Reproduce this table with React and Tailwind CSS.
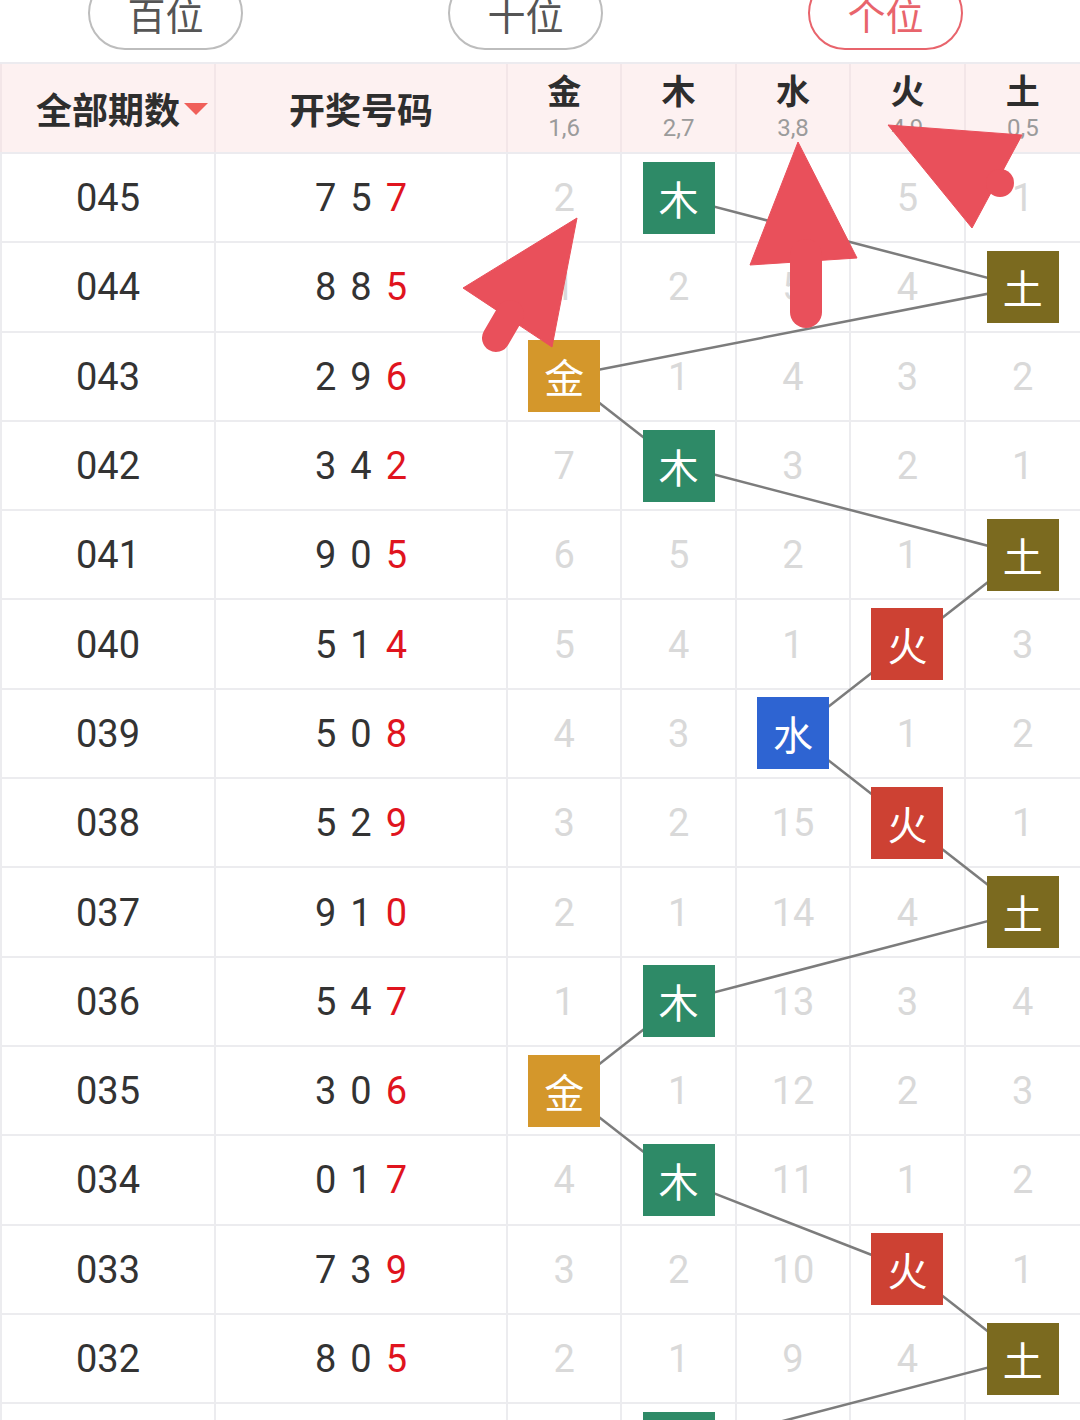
import React from 'react';

const CJK = { fontFamily: '"Noto Sans CJK SC", "Noto Sans", sans-serif' };
const NUM = { fontFamily: 'Roboto, "Noto Sans", sans-serif' };

const ELEMS = [
  { name: '金', sub: '1,6', bg: 'bg-[#d4972b]' },
  { name: '木', sub: '2,7', bg: 'bg-[#2e8a67]' },
  { name: '水', sub: '3,8', bg: 'bg-[#2e64d2]' },
  { name: '火', sub: '4,9', bg: 'bg-[#cd4133]' },
  { name: '土', sub: '0,5', bg: 'bg-[#7b6a1f]' },
];

// issue, draw, hit column, omission values
const rows = [
  ['045', '757', 1, [2, 0, 6, 5, 1]],
  ['044', '885', 4, [1, 2, 5, 4, 0]],
  ['043', '296', 0, [0, 1, 4, 3, 2]],
  ['042', '342', 1, [7, 0, 3, 2, 1]],
  ['041', '905', 4, [6, 5, 2, 1, 0]],
  ['040', '514', 3, [5, 4, 1, 0, 3]],
  ['039', '508', 2, [4, 3, 0, 1, 2]],
  ['038', '529', 3, [3, 2, 15, 0, 1]],
  ['037', '910', 4, [2, 1, 14, 4, 0]],
  ['036', '547', 1, [1, 0, 13, 3, 4]],
  ['035', '306', 0, [0, 1, 12, 2, 3]],
  ['034', '017', 1, [4, 0, 11, 1, 2]],
  ['033', '739', 3, [3, 2, 10, 0, 1]],
  ['032', '805', 4, [2, 1, 9, 4, 0]],
  ['031', '462', 1, [1, 0, 8, 3, 1]],
];

const ROW_H = 89.3;
const colX = (i) => 508 + 114.4 * i + 57.2;

const Tab = ({ label, active }) => (
  <div
    className={`w-[155px] h-[74px] -mt-[24px] rounded-full border-2 flex items-center justify-center text-[38px] ${
      active ? 'border-[#e8646c] text-[#e8646c]' : 'border-[#bdbdbd] text-[#555]'
    }`}
    style={CJK}
  >
    {label}
  </div>
);

const App = () => {
  return (
    <div className="relative w-[1080px] h-[1420px] overflow-hidden bg-white">
      {/* position tabs */}
      <div className="h-[62px] overflow-hidden grid grid-cols-3">
        <div className="pl-[88px]"><Tab label="百位" /></div>
        <div className="pl-[88px]"><Tab label="十位" /></div>
        <div className="pl-[88px]"><Tab label="个位" active /></div>
      </div>

      {/* header */}
      <div className="grid grid-cols-[216px_292px_repeat(5,1fr)] h-[92px] bg-[#fdf1f1] border-t-2 border-b-2 border-[#ecebef]" style={CJK}>
        <div className="flex items-center justify-center border-l-2 border-r-2 border-[#f3e6e8] font-bold text-[36px] text-[#2e2e2e]">
          <span className="relative">
            全部期数
            <span className="absolute left-full top-1/2 ml-[4px] -mt-[5px] w-0 h-0 border-l-[12px] border-r-[12px] border-t-[12px] border-l-transparent border-r-transparent border-t-[#f0605a]"></span>
          </span>
        </div>
        <div className="flex items-center justify-center border-r-2 border-[#f3e6e8] font-bold text-[36px] text-[#2e2e2e]">
          开奖号码
        </div>
        {ELEMS.map((e) => (
          <div key={e.name} className="flex flex-col items-center pt-[4px] border-r-2 border-[#f3e6e8] last:border-r-0">
            <span className="font-bold text-[34px] leading-[44px] text-[#2e2e2e]">{e.name}</span>
            <span className="text-[24px] leading-[32px] text-[#9b9b9b]" style={NUM}>{e.sub}</span>
          </div>
        ))}
      </div>

      {/* body */}
      <div className="relative">
        <svg
          className="absolute left-0 top-0 pointer-events-none"
          width="1080"
          height={rows.length * ROW_H}
        >
          {rows.slice(0, -1).map((r, i) => (
            <line
              key={i}
              x1={colX(r[2])}
              y1={i * ROW_H + ROW_H / 2 - 1}
              x2={colX(rows[i + 1][2])}
              y2={(i + 1) * ROW_H + ROW_H / 2 - 1}
              stroke="#7c7c7c"
              strokeWidth="2.5"
            />
          ))}
        </svg>

        {rows.map(([issue, draw, hit, vals]) => (
          <div key={issue} className="grid grid-cols-[216px_292px_repeat(5,1fr)] h-[89.3px]">
            <div className="flex items-center justify-center pt-[2px] border-l-2 border-r-2 border-b-2 border-[#ececef] text-[38px] text-[#333]" style={NUM}>
              {issue}
            </div>
            <div className="flex items-center justify-center gap-[14px] pt-[2px] border-r-2 border-b-2 border-[#ececef] text-[38px] text-[#333]" style={NUM}>
              <span>{draw[0]}</span>
              <span>{draw[1]}</span>
              <span className="text-[#e0141e]">{draw[2]}</span>
            </div>
            {vals.map((v, i) => (
              <div key={i} className="flex items-center justify-center border-r-2 border-b-2 border-[#ececef] last:border-r-0">
                {i === hit ? (
                  <div
                    className={`relative z-10 w-[72px] h-[72px] flex items-center justify-center text-white text-[40px] ${ELEMS[i].bg}`}
                    style={CJK}
                  >
                    {ELEMS[i].name}
                  </div>
                ) : (
                  <span className="pt-[2px] text-[38px] text-[#d9d9d9]" style={NUM}>{v}</span>
                )}
              </div>
            ))}
          </div>
        ))}
      </div>

      {/* annotation arrows */}
      <svg className="absolute left-0 top-0 z-20 pointer-events-none" width="1080" height="1420">
        <g fill="#e9505b" stroke="#e9505b" strokeLinejoin="round">
          <polygon points="577,218 463,288 552,347" />
          <line x1="510" y1="314" x2="496" y2="338" strokeWidth="28" strokeLinecap="round" />
          <polygon points="798,142 750,265 857,258" />
          <line x1="806" y1="255" x2="806" y2="312" strokeWidth="32" strokeLinecap="round" />
          <polygon points="888,125 1022,135 972,228" />
          <circle cx="1000" cy="183" r="14" stroke="none" />
        </g>
      </svg>
    </div>
  );
};

export default App;
